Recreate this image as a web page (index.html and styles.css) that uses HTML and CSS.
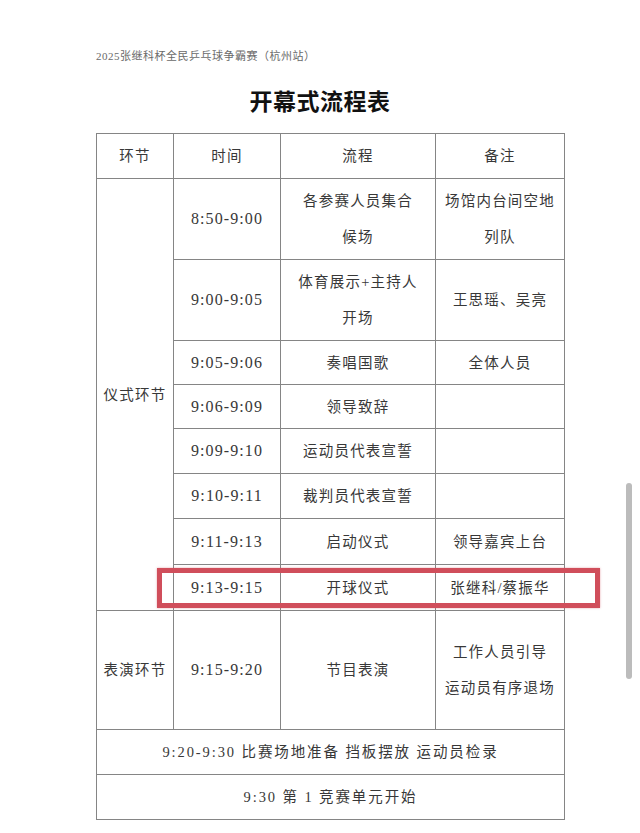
FILE: index.html
```html
<!DOCTYPE html>
<html lang="zh-CN">
<head>
<meta charset="utf-8">
<title>开幕式流程表</title>
<link rel="stylesheet" href="styles.css">
</head>
<body>
<div class="page">
  <p class="sub">2025张继科杯全民乒乓球争霸赛（杭州站）</p>
  <h1 class="title">开幕式流程表</h1>
  <div class="table-wrap">
    <table class="sched">
      <colgroup>
        <col class="c1"><col class="c2"><col class="c3"><col class="c4">
      </colgroup>
      <tr class="r-head">
        <td class="cjk">环节</td><td class="cjk">时间</td><td class="cjk">流程</td><td class="cjk">备注</td>
      </tr>
      <tr class="r-tall">
        <td rowspan="8" class="cjk">仪式环节</td>
        <td class="time">8:50-9:00</td>
        <td class="cjk two">各参赛人员集合<br>候场</td>
        <td class="cjk two">场馆内台间空地<br>列队</td>
      </tr>
      <tr class="r-tall">
        <td class="time">9:00-9:05</td>
        <td class="cjk two">体育展示+主持人<br>开场</td>
        <td class="cjk">王思瑶、吴亮</td>
      </tr>
      <tr class="r-44">
        <td class="time">9:05-9:06</td>
        <td class="cjk">奏唱国歌</td>
        <td class="cjk">全体人员</td>
      </tr>
      <tr class="r-44">
        <td class="time">9:06-9:09</td>
        <td class="cjk">领导致辞</td>
        <td></td>
      </tr>
      <tr class="r-45">
        <td class="time">9:09-9:10</td>
        <td class="cjk">运动员代表宣誓</td>
        <td></td>
      </tr>
      <tr class="r-45">
        <td class="time">9:10-9:11</td>
        <td class="cjk">裁判员代表宣誓</td>
        <td></td>
      </tr>
      <tr class="r-46">
        <td class="time">9:11-9:13</td>
        <td class="cjk">启动仪式</td>
        <td class="cjk">领导嘉宾上台</td>
      </tr>
      <tr class="r-46">
        <td class="time">9:13-9:15</td>
        <td class="cjk">开球仪式</td>
        <td class="cjk">张继科/蔡振华</td>
      </tr>
      <tr class="r-perf">
        <td class="cjk">表演环节</td>
        <td class="time">9:15-9:20</td>
        <td class="cjk">节目表演</td>
        <td class="cjk two">工作人员引导<br>运动员有序退场</td>
      </tr>
      <tr class="r-45">
        <td colspan="4" class="cjk wide">9:20-9:30 比赛场地准备 挡板摆放 运动员检录</td>
      </tr>
      <tr class="r-45">
        <td colspan="4" class="cjk wide">9:30 第 1 竞赛单元开始</td>
      </tr>
    </table>
    <div class="highlight"></div>
  </div>
  <div class="scrollbar"></div>
</div>
</body>
</html>
```

FILE: styles.css
```css
html, body {
  margin: 0;
  padding: 0;
  background: #ffffff;
}

.page {
  position: relative;
  width: 640px;
  height: 833px;
  padding-top: 49px;
  box-sizing: border-box;
  overflow: hidden;
}

.sub {
  margin: 0 0 0 96px;
  font-family: "Liberation Serif", "Noto Sans CJK SC", serif;
  font-size: 11px;
  line-height: 14px;
  color: #6a6a6a;
  letter-spacing: 0.5px;
}

.title {
  margin: 22px 0 0 0;
  text-align: center;
  font-family: "Noto Sans CJK SC", sans-serif;
  font-weight: 700;
  font-size: 23px;
  line-height: 30px;
  color: #111111;
  letter-spacing: 0.5px;
}

.table-wrap {
  position: relative;
  margin: 18px 0 0 96px;
  width: 468px;
}

.sched {
  border-collapse: collapse;
  table-layout: fixed;
  width: 468px;
}

.c1 { width: 77px; }
.c2 { width: 107px; }
.c3 { width: 155px; }
.c4 { width: 129px; }

.sched td {
  border: 1px solid #858585;
  padding: 0;
  text-align: center;
  vertical-align: middle;
  color: #383838;
  font-family: "Liberation Serif", "Noto Sans CJK SC", serif;
}

.sched td.cjk {
  font-size: 14.5px;
  letter-spacing: 1.2px;
  line-height: 20px;
}

.sched td.two {
  line-height: 36px;
}

.sched td.wide {
  letter-spacing: 1.9px;
}

.sched td.time {
  font-size: 16px;
  letter-spacing: 1.1px;
  line-height: 20px;
}

.r-head { height: 45px; }
.r-tall { height: 81px; }
.r-44 { height: 44px; }
.r-45 { height: 45px; }
.r-46 { height: 46px; }
.r-perf { height: 119px; }

.highlight {
  position: absolute;
  left: 61px;
  top: 435px;
  width: 443px;
  height: 40px;
  box-sizing: border-box;
  border: 5px solid #d04e5b;
  box-shadow: 0 0 2px rgba(208, 78, 91, 0.5);
}

.scrollbar {
  position: absolute;
  left: 626px;
  top: 483px;
  width: 6px;
  height: 196px;
  border-radius: 3px;
  background: #bcbcbc;
}
```
